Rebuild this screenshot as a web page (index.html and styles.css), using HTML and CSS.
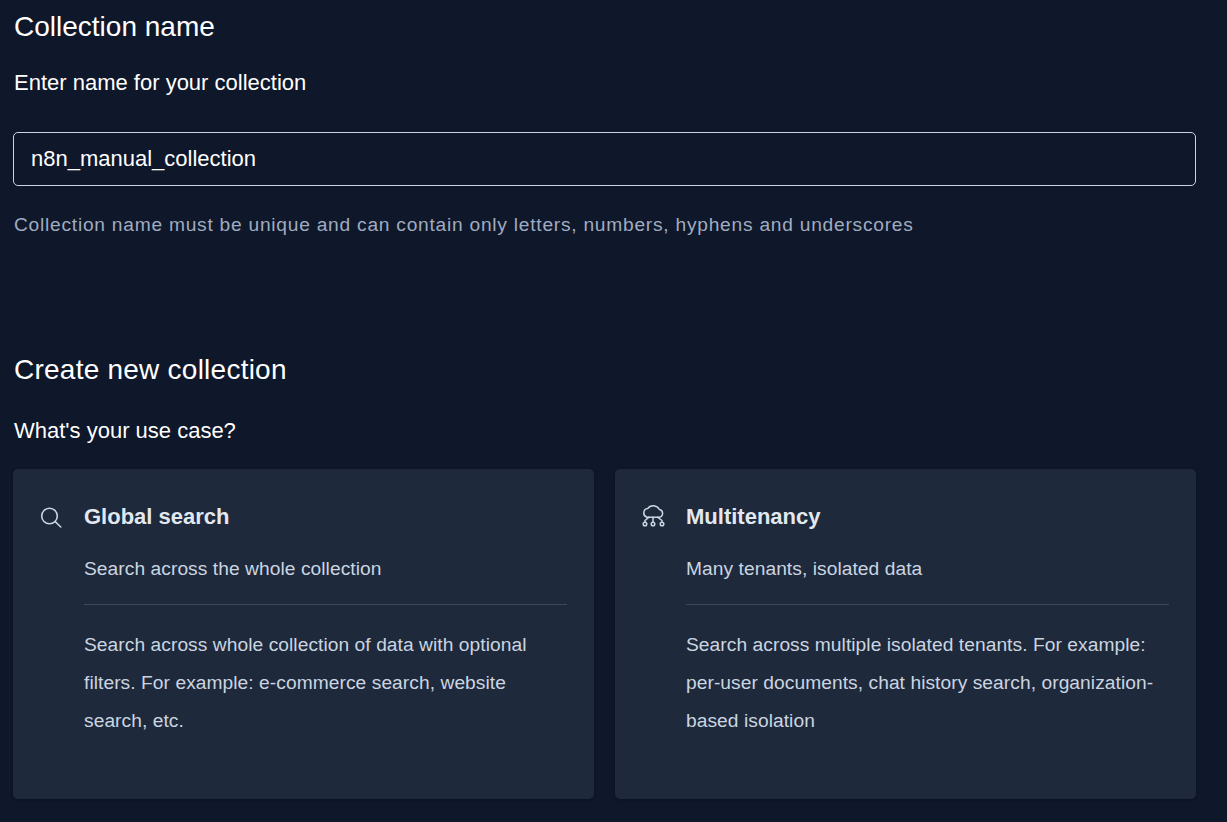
FILE: index.html
```html
<!DOCTYPE html>
<html lang="en">
<head>
<meta charset="utf-8">
<title>Create collection</title>
<link rel="stylesheet" href="styles.css">
</head>
<body>
<main class="page">
  <section class="name-section">
    <h2 class="heading">Collection name</h2>
    <p class="subheading">Enter name for your collection</p>
    <div class="field"><input class="field-input" type="text" value="n8n_manual_collection" aria-label="Collection name"></div>
    <p class="helper">Collection name must be unique and can contain only letters, numbers, hyphens and underscores</p>
  </section>
  <section class="usecase-section">
    <h2 class="heading heading-wide">Create new collection</h2>
    <p class="subheading usecase-q">What's your use case?</p>
    <div class="cards">
      <article class="card">
        <div class="card-icon">
          <svg width="24" height="24" viewBox="0 0 24 24" fill="none" stroke="currentColor" stroke-width="1.6" stroke-linecap="round" stroke-linejoin="round"><circle cx="10.5" cy="11" r="7.8"/><path d="M16.2 16.7 21.8 22"/></svg>
        </div>
        <div class="card-body">
          <h3 class="card-title">Global search</h3>
          <p class="card-sub">Search across the whole collection</p>
          <hr class="card-rule">
          <p class="card-desc">Search across whole collection of data with optional filters. For example: e-commerce search, website search, etc.</p>
        </div>
      </article>
      <article class="card">
        <div class="card-icon">
          <svg width="24" height="24" viewBox="0 0 24 24" fill="none" stroke="currentColor" stroke-width="1.5" stroke-linecap="round" stroke-linejoin="round"><path d="M6 12.2H18.2A3.9 3.9 0 0 0 18.4 4.5 7 7 0 0 0 6.6 3.6 4.4 4.4 0 0 0 6 12.2Z"/><path d="M12 12.2V17.2M8 12.2 4 15.5V17.2M16.5 12.2 21 15.5V17.2"/><circle cx="4" cy="19" r="1.8"/><circle cx="12" cy="19" r="1.8"/><circle cx="21" cy="19" r="1.8"/></svg>
        </div>
        <div class="card-body">
          <h3 class="card-title">Multitenancy</h3>
          <p class="card-sub">Many tenants, isolated data</p>
          <hr class="card-rule">
          <p class="card-desc">Search across multiple isolated tenants. For example: per-user documents, chat history search, organization-based isolation</p>
        </div>
      </article>
    </div>
  </section>
</main>
</body>
</html>
```
FILE: styles.css
```css
* { box-sizing: border-box; }
html, body { margin: 0; height: 100%; }
body {
  background: #0f172a;
  color: #fff;
  font-family: "Liberation Sans", Arial, sans-serif;
  overflow: hidden;
}
.page { padding: 0 31px 0 13px; }
.name-section { padding-top: 10px; }
.heading {
  margin: 0 0 0 1px;
  font-size: 28px;
  font-weight: 400;
  line-height: 34px;
}
.heading-wide { letter-spacing: 0.24px; }
.subheading {
  margin: 0 0 0 1px;
  padding-top: 24px;
  font-size: 22px;
  line-height: 30px;
}
.field { margin-top: 34px; }
.field-input {
  display: block;
  width: 100%;
  height: 54px;
  padding: 0 17px;
  background: transparent;
  border: 1px solid #cbd5e1;
  border-radius: 5px;
  color: #fff;
  font: 400 22px "Liberation Sans", Arial, sans-serif;
  outline: none;
}
.helper {
  margin: 26px 0 0 1px;
  color: #a0acc0;
  font-size: 19.2px;
  line-height: 26px;
  letter-spacing: 0.75px;
}
.usecase-section { margin-top: 115px; }
.usecase-q { padding-top: 29px; }
.cards {
  display: grid;
  grid-template-columns: 581px 581px;
  gap: 21px;
  margin-top: 23px;
}
.card {
  display: flex;
  height: 330px;
  padding: 36px 27px 0 26px;
  background: #1e293b;
  border-radius: 5px;
  box-shadow: 0 1px 3px rgba(0,0,0,.3);
}
.card-icon {
  flex: 0 0 45px;
  height: 24px;
  color: #cbd5e1;
}
.card-body { flex: 1; min-width: 0; }
.card-title {
  margin: 0;
  color: #e2e8f0;
  font-size: 22px;
  font-weight: 700;
  line-height: 24px;
}
.card-sub {
  margin: 26px 0 0;
  color: #cbd5e1;
  font-size: 19.2px;
  line-height: 28px;
  letter-spacing: 0.06px;
}
.card-rule {
  margin: 21px 0 21px;
  border: 0;
  border-top: 1px solid #3e4859;
}
.card-desc {
  margin: 0;
  color: #cbd5e1;
  font-size: 19.2px;
  line-height: 38px;
  letter-spacing: 0.06px;
}
```
